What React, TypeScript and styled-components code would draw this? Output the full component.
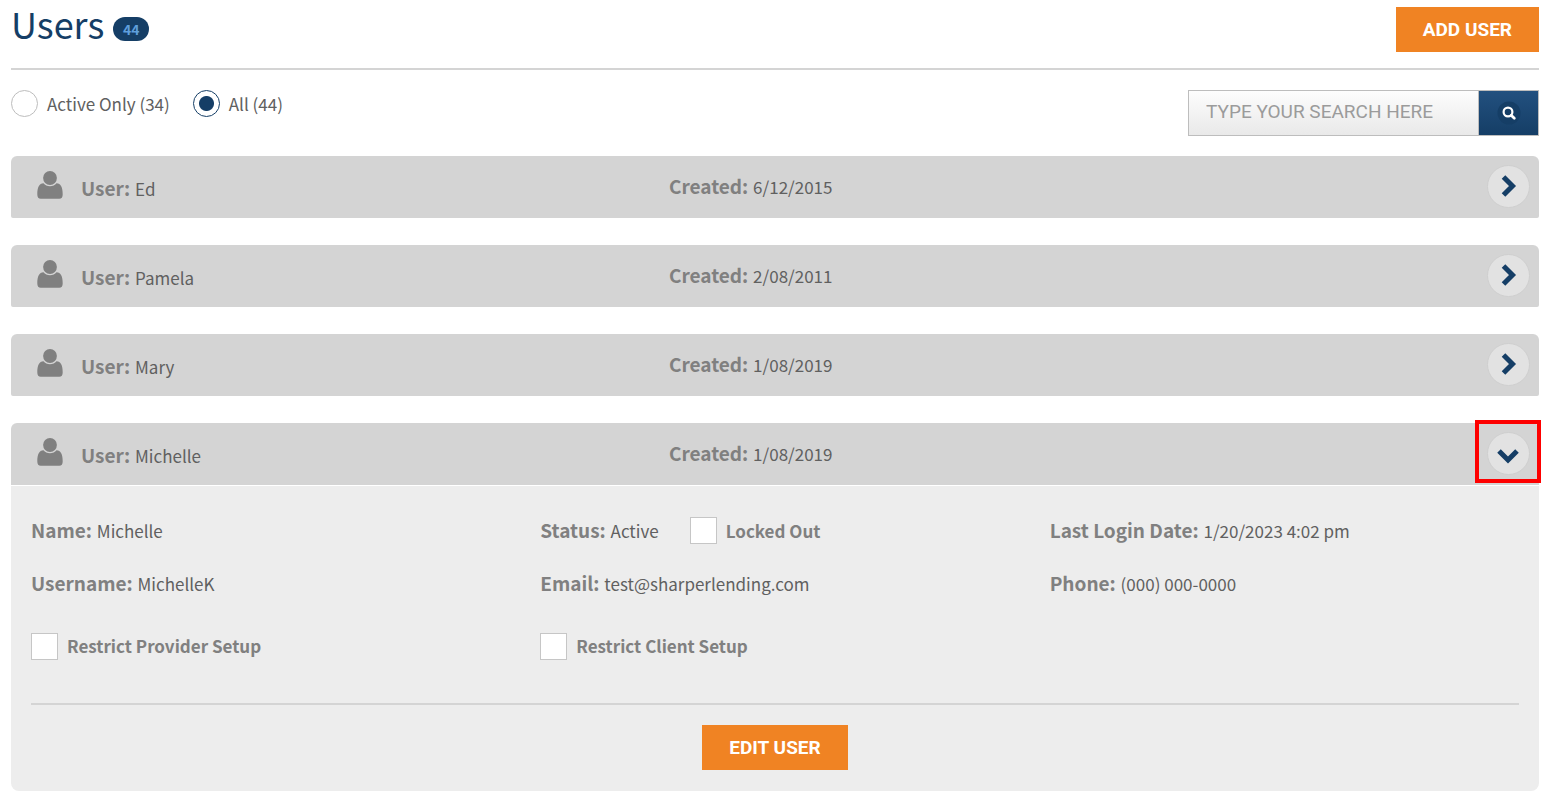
import React from "react";
import styled, { createGlobalStyle, css } from "styled-components";

const navy = "#153e66";
const grey = "#808080";
const text = "#606060";

const GlobalStyle = createGlobalStyle`
  * { box-sizing: border-box; }
  body {
    margin: 0;
    background: #fff;
    color: ${text};
    font-family: "Noto Sans CJK SC", sans-serif;
    font-size: 17px;
    font-weight: 400;
    line-height: 24px;
  }
`;

const Page = styled.main`
  padding: 7px 14px 8px 11px;
`;

const Header = styled.header`
  display: flex;
  justify-content: space-between;
  align-items: flex-start;
  padding-bottom: 16px;
  border-bottom: 2px solid #d4d4d4;
`;

const TitleGroup = styled.div`
  display: flex;
  align-items: center;
  gap: 9px;
  height: 32px;
`;

const Title = styled.h1`
  margin: 0;
  color: ${navy};
  font-size: 36px;
  font-weight: 400;
  line-height: 36px;
`;

const Badge = styled.span`
  width: 36px;
  margin-top: 12px;
  border-radius: 12px;
  background: ${navy};
  color: #5f9fdc;
  font-size: 14px;
  font-weight: 700;
  line-height: 24px;
  text-align: center;
`;

const PrimaryButton = styled.button`
  height: 45px;
  padding: 0 27px;
  border: 0;
  background: #f08323;
  color: #fff;
  font-family: Roboto, sans-serif;
  font-size: 19px;
  font-weight: 700;
  cursor: pointer;
`;

const Toolbar = styled.div`
  display: flex;
  justify-content: space-between;
  align-items: flex-start;
  padding: 20px 0;
`;

const Filters = styled.div`
  display: flex;
  gap: 23px;
`;

const FilterLabel = styled.label`
  display: flex;
  align-items: center;
  gap: 9px;
  height: 27px;
`;

const Radio = styled.input`
  appearance: none;
  width: 27px;
  height: 27px;
  margin: 0;
  border: 1px solid #bdbdbd;
  border-radius: 50%;
  background: #fff;
  &:checked {
    border-color: ${navy};
    background: radial-gradient(circle, ${navy} 7px, #fff 8px);
  }
`;

const Search = styled.form`
  display: flex;
  width: 351px;
  height: 46px;
  border: 1px solid #bdbdbd;
`;

const SearchInput = styled.input`
  flex: 1;
  min-width: 0;
  padding: 0 17px 3px;
  border: 0;
  background: linear-gradient(#fdfdfd, #e9e9e9);
  color: ${text};
  font-family: Roboto, sans-serif;
  font-size: 19px;
  &::placeholder { color: #9b9b9b; opacity: 1; }
`;

const SearchButton = styled.button`
  display: flex;
  align-items: center;
  justify-content: center;
  width: 60px;
  padding: 0;
  border: 0;
  border-left: 1px solid #bdbdbd;
  background: linear-gradient(#22507f, #153e66);
  cursor: pointer;
`;

const UserList = styled.section`
  display: flex;
  flex-direction: column;
  gap: 27px;
`;

const Card = styled.article`
  border-radius: 8px;
`;

const CardHeader = styled.div<{ $open?: boolean }>`
  display: grid;
  grid-template-columns: 43fr 57fr;
  align-items: center;
  height: 62px;
  padding-bottom: 2px;
  border-radius: ${(p) => (p.$open ? "6px 6px 0 0" : "6px 6px 2px 2px")};
  background: #d4d4d4;
`;

const UserCell = styled.div`
  display: flex;
  align-items: flex-start;
  gap: 18px;
  padding-left: 26px;
`;

const CreatedCell = styled.div`
  display: flex;
  align-items: center;
  justify-content: space-between;
  padding: 0 9px 0 1px;
`;

const Field = styled.span<{ $low?: boolean }>`
  ${(p) => p.$low && css`padding: 5px 0 1px;`}
`;

const FieldLabel = styled.strong`
  margin-right: 1px;
  color: ${grey};
  font-size: 19px;
  font-weight: 700;
`;

const Toggle = styled.button`
  display: flex;
  align-items: center;
  justify-content: center;
  width: 43px;
  height: 43px;
  padding: 0;
  border: 1px solid #cfcfcf;
  border-radius: 50%;
  background: #e2e2e2;
  cursor: pointer;
`;

const ToggleFrame = styled.div<{ $marked: boolean }>`
  ${(p) =>
    p.$marked &&
    css`
      margin: -12px -11px -8px 0;
      padding: 8px 7px 4px 8px;
      border: 4px solid #fe0000;
    `}
`;

const Details = styled.div`
  margin-top: 1px;
  padding-bottom: 21px;
  border-radius: 0 0 8px 8px;
  background: #ededed;
`;

const DetailGrid = styled.div`
  display: grid;
  grid-template-columns: repeat(3, 1fr);
  grid-template-rows: 53px 53px 72px;
  align-items: center;
  padding-top: 18px;
`;

const DetailCell = styled.div`
  display: flex;
  align-items: center;
  gap: 31px;
  padding-left: 20px;
`;

const CheckLabel = styled.label`
  display: flex;
  align-items: center;
  gap: 9px;
  color: ${grey};
  font-weight: 700;
`;

const Checkbox = styled.input`
  appearance: none;
  width: 27px;
  height: 27px;
  margin: 0;
  border: 1px solid #c6c6c6;
  background: #fff;
  &:checked { background: ${navy}; }
`;

const DetailFooter = styled.div`
  display: flex;
  justify-content: center;
  margin: 21px 20px 0;
  padding-top: 20px;
  border-top: 2px solid #d4d4d4;
`;

const UserIcon = () => (
  <svg width="26" height="28" viewBox="0 0 26 28" fill={grey} aria-hidden="true">
    <circle cx="13" cy="7" r="6.900" />
    <path d="M6.500 12.300C8 14.200 10.300 15.200 13 15.200S18 14.200 19.500 12.300C23.800 12.300 25.700 16.500 25.700 23.500Q25.700 27.700 22.200 27.700H3.800Q.3 27.700 .3 23.500C.3 16.500 2.200 12.300 6.500 12.300Z" />
  </svg>
);

const Chevron = ({ down }: { down?: boolean }) => (
  <svg width="24" height="24" viewBox="0 0 24 24" fill="none" stroke={navy} strokeWidth="5" strokeLinejoin="miter" aria-hidden="true">
    <path d={down ? "M3 10L12 19L21 10" : "M7.500 3L16.500 12L7.500 21"} />
  </svg>
);

const SearchIcon = () => (
  <svg width="24" height="24" viewBox="0 0 24 24" fill="none" stroke="#fff" aria-hidden="true">
    <circle cx="12" cy="12" r="11.500" fill={navy} stroke="none" />
    <circle cx="11" cy="11" r="4.400" strokeWidth="2.200" />
    <path d="M14.200 14.200L17.300 17.300" strokeWidth="2.800" strokeLinecap="round" />
  </svg>
);

const users = [
  { name: "Ed", created: "6/12/2015" },
  { name: "Pamela", created: "2/08/2011" },
  { name: "Mary", created: "1/08/2019" },
  { name: "Michelle", created: "1/08/2019", open: true },
];

const Pair = ({ label, value, low }: { label: string; value: string; low?: boolean }) => (
  <Field $low={low}>
    <FieldLabel>{label}:</FieldLabel> {value}
  </Field>
);

const Check = ({ label }: { label: string }) => (
  <CheckLabel>
    <Checkbox type="checkbox" />
    {label}
  </CheckLabel>
);

export default function App() {
  return (
    <>
      <GlobalStyle />
      <Page>
        <Header>
          <TitleGroup>
            <Title>Users</Title>
            <Badge>44</Badge>
          </TitleGroup>
          <PrimaryButton type="button">ADD USER</PrimaryButton>
        </Header>
        <Toolbar>
          <Filters>
            <FilterLabel>
              <Radio type="radio" name="filter" />
              Active Only (34)
            </FilterLabel>
            <FilterLabel>
              <Radio type="radio" name="filter" defaultChecked />
              All (44)
            </FilterLabel>
          </Filters>
          <Search onSubmit={(e) => e.preventDefault()}>
            <SearchInput type="text" placeholder="TYPE YOUR SEARCH HERE" aria-label="Search users" />
            <SearchButton type="submit" aria-label="Search">
              <SearchIcon />
            </SearchButton>
          </Search>
        </Toolbar>
        <UserList>
          {users.map((user) => (
            <Card key={user.name}>
              <CardHeader $open={user.open}>
                <UserCell>
                  <UserIcon />
                  <Pair label="User" value={user.name} low />
                </UserCell>
                <CreatedCell>
                  <Pair label="Created" value={user.created} />
                  <ToggleFrame $marked={!!user.open}>
                    <Toggle type="button" aria-label={`Details for ${user.name}`} aria-expanded={!!user.open}>
                      <Chevron down={user.open} />
                    </Toggle>
                  </ToggleFrame>
                </CreatedCell>
              </CardHeader>
              {user.open && (
                <Details>
                  <DetailGrid>
                    <DetailCell><Pair label="Name" value="Michelle" /></DetailCell>
                    <DetailCell>
                      <Pair label="Status" value="Active" />
                      <Check label="Locked Out" />
                    </DetailCell>
                    <DetailCell><Pair label="Last Login Date" value="1/20/2023 4:02 pm" /></DetailCell>
                    <DetailCell><Pair label="Username" value="MichelleK" /></DetailCell>
                    <DetailCell><Pair label="Email" value="test@sharperlending.com" /></DetailCell>
                    <DetailCell><Pair label="Phone" value="(000) 000-0000" /></DetailCell>
                    <DetailCell><Check label="Restrict Provider Setup" /></DetailCell>
                    <DetailCell><Check label="Restrict Client Setup" /></DetailCell>
                  </DetailGrid>
                  <DetailFooter>
                    <PrimaryButton type="button">EDIT USER</PrimaryButton>
                  </DetailFooter>
                </Details>
              )}
            </Card>
          ))}
        </UserList>
      </Page>
    </>
  );
}
